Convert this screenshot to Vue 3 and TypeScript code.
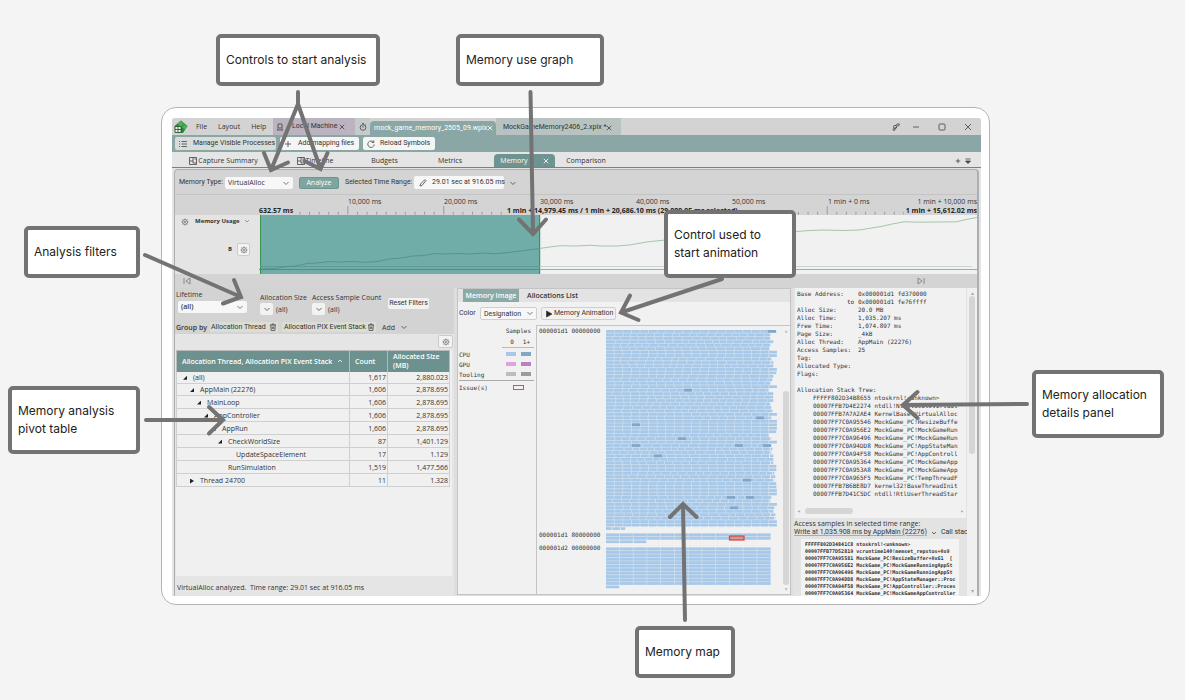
<script setup lang="ts">
interface Callout { id: string; lines: string[] }
interface TreeRow { name: string; level: number; mark: string; count: string; size: string }
interface Block { x: number; y: number; w: number; dark: boolean }

const callouts: Callout[] = [
  { id: 'start', lines: ['Controls to start analysis'] },
  { id: 'graph', lines: ['Memory use graph'] },
  { id: 'filters', lines: ['Analysis filters'] },
  { id: 'animation', lines: ['Control used to', 'start animation'] },
  { id: 'pivot', lines: ['Memory analysis', 'pivot table'] },
  { id: 'details', lines: ['Memory allocation', 'details panel'] },
  { id: 'map', lines: ['Memory map'] },
]

const arrows: string[] = [
  'M298 92V104L271 170M264 153L271 170L288 162.500M298 104L320.500 169M304.500 161L320.500 169L327.500 153',
  'M530.500 92L533 234M519 219.500L533 234L546 219.500',
  'M722 279L621 312.500M630 295.500L621 312.500L638.500 320',
  'M145 255L241 297M234 280L241 297L223 303.500',
  'M146 420H223M209 407L223 420L209 433.500',
  'M1027 404L903 405M917.500 392L903 405L917.500 418',
  'M685 620L683 504M670 517L683 504L696.500 517',
]

const timeLabels = ['10,000 ms', '20,000 ms', '30,000 ms', '40,000 ms', '50,000 ms', '1 min + 0 ms', '1 min + 10,000 ms']
const ticks = Array.from({ length: 68 }, (_, k) => ({ x: 89 + (k - 5) * 9.6, major: (k - 5) % 10 === 0 }))

const rows: TreeRow[] = [
  { name: '(all)', level: 0, mark: 'open', count: '1,617', size: '2,880.023' },
  { name: 'AppMain (22276)', level: 1, mark: 'open', count: '1,606', size: '2,878.695' },
  { name: 'MainLoop', level: 2, mark: 'open', count: '1,606', size: '2,878.695' },
  { name: 'AppController', level: 3, mark: 'open', count: '1,606', size: '2,878.695' },
  { name: 'AppRun', level: 4, mark: 'open', count: '1,606', size: '2,878.695' },
  { name: 'CheckWorldSize', level: 5, mark: 'open', count: '87', size: '1,401.129' },
  { name: 'UpdateSpaceElement', level: 6, mark: '', count: '17', size: '1.129' },
  { name: 'RunSimulation', level: 5, mark: '', count: '1,519', size: '1,477.566' },
  { name: 'Thread 24700', level: 1, mark: 'closed', count: '11', size: '1.328' },
]

const details: [string, string][] = [
  ['Base Address:', '0x000001d1 fd370000'],
  ['to', '0x000001d1 fe76ffff'],
  ['Alloc Size:', '20.0 MB'],
  ['Alloc Time:', '1,035.207 ms'],
  ['Free Time:', '1,074.897 ms'],
  ['Page Size:', '_4kB'],
  ['Alloc Thread:', 'AppMain (22276)'],
  ['Access Samples:', '25'],
  ['Tag:', ''],
  ['Allocated Type:', ''],
  ['Flags:', ''],
]

const stack = `FFFFF802D34B8655 ntoskrnl!<unknown>
00007FFB7D4E2274 ntdll!NtAllocateVirtual
00007FFB7A7A2AE4 KernelBase!VirtualAlloc
00007FF7C0A95546 MockGame_PC!ResizeBuffe
00007FF7C0A956E2 MockGame_PC!MockGameRun
00007FF7C0A96496 MockGame_PC!MockGameRun
00007FF7C0A94DD8 MockGame_PC!AppStateMan
00007FF7C0A94F58 MockGame_PC!AppControll
00007FF7C0A95364 MockGame_PC!MockGameApp
00007FF7C0A953A8 MockGame_PC!MockGameApp
00007FF7C0A965F5 MockGame_PC!TempThreadF
00007FFB7B6BE8D7 kernel32!BaseThreadInit
00007FFB7D41C5DC ntdll!RtlUserThreadStar`

const sampleStack = `FFFFF802D34841C8 ntoskrnl!<unknown>
00007FFB77D52819 vcruntime140!memset_repstos+0x9
00007FF7C0A95581 MockGame_PC!ResizeBuffer+0x61  [
00007FF7C0A956E2 MockGame_PC!MockGameRunningAppSt
00007FF7C0A96496 MockGame_PC!MockGameRunningAppSt
00007FF7C0A94DD8 MockGame_PC!AppStateManager::Proc
00007FF7C0A94F58 MockGame_PC!AppController::Proces
00007FF7C0A95364 MockGame_PC!MockGameAppController`

const legend = [
  { name: 'CPU', id: 'cpu' },
  { name: 'GPU', id: 'gpu' },
  { name: 'Tooling', id: 'tooling' },
]

const pitch = 3.46
const rowEnds = [171, 165, 165, 168, 165, 164, 172, 172, 166, 168, 169, 172, 171, 168, 167, 165, 172, 163, 168, 168, 168, 165, 166, 167, 172, 166, 172, 172, 172, 171, 163, 166, 172, 166, 167, 166, 168, 168, 168, 171, 171, 169, 170, 169, 171, 171, 172, 172, 167, 165, 172, 169, 168, 170, 170, 172, 172, 20]
const hot: Record<number, number[]> = {
  0: [162], 17: [78], 25: [150], 27: [26], 31: [72], 33: [26, 129, 157], 36: [48],
  43: [137], 48: [121, 140], 51: [124],
}

function buildMap(): Block[] {
  const out: Block[] = []
  let seed = 17
  const rnd = () => {
    seed = (seed * 1103515245 + 12345) % 2147483648
    return seed / 2147483648
  }
  rowEnds.forEach((end, r) => {
    const regular = end >= 171
    let x = 0
    while (x < end - 1) {
      const step = regular ? 8.58 : 6.5 + Math.round(rnd() * 4) * 0.9
      const w = Math.min(step, end - x)
      out.push({ x, y: r * pitch, w: w - 0.7, dark: false })
      x += step
    }
    for (const h of hot[r] ?? []) out.push({ x: h, y: r * pitch, w: 8, dark: true })
  })
  const solid = (y0: number, count: number, tail: number) => {
    for (let r = 0; r <= count; r++) {
      const end = r === count ? tail : 165
      for (let x = 0; x < end - 1; x += 13.75) {
        out.push({ x, y: y0 + r * pitch, w: Math.min(13.75, end - x) - 0.7, dark: false })
      }
    }
  }
  solid(203.5, 2, 41)
  solid(217.5, 11, 13.75)
  return out
}
const blocks = buildMap()
const gearTeeth = Array.from({ length: 8 }, (_, i) => i * 45)
</script>

<template>
  <main class="page">
    <section class="device">
      <div class="app">
        <header class="titlebar">
          <svg class="logo" viewBox="0 0 14 14"><path d="M7 .5L13.500 6L9 13L1 12.500L.5 6Z" fill="#238a35" /><path d="M7 1L10 4L7 7L3.500 4ZM10.500 4.500L13 6.500L10.500 9.500L8 7Z" fill="#49b257" /><path d="M1 6.500H7V12.500H1Z" fill="#e9f3e9" stroke="#234b2b" stroke-width=".8" /><path d="M4 6.500V12.500M1 9.500H7" stroke="#234b2b" stroke-width=".8" /></svg>
          <nav class="menu"><button>File</button><button>Layout</button><button>Help</button></nav>
          <div class="doc machine">
            <svg class="i8" viewBox="0 0 8 8"><path d="M2 1H6V5H2ZM1 7H7M2 5.500L1.500 7M6 5.500L6.500 7" /></svg>
            <span>Local Machine</span><button class="x" aria-label="Close Local Machine"><svg class="i6" viewBox="0 0 8 8"><path d="M1 1L7 7M7 1L1 7" /></svg></button>
          </div>
          <div class="watch"><svg class="i8" viewBox="0 0 8 8"><circle cx="4" cy="4.500" r="2.800" /><path d="M3 .6H5M4 3V4.500M6.200 1.500L7 2.300" /></svg></div>
          <div class="doc current"><span>mock_game_memory_2505_09.wpix</span><button class="x" aria-label="Close capture"><svg class="i6 white" viewBox="0 0 8 8"><path d="M1 1L7 7M7 1L1 7" /></svg></button></div>
          <div class="doc other"><span>MockGameMemory2406_2.xpix *</span><button class="x" aria-label="Close comparison capture"><svg class="i6" viewBox="0 0 8 8"><path d="M1 1L7 7M7 1L1 7" /></svg></button></div>
          <div class="winbtns">
            <button aria-label="Feedback"><svg class="i8" viewBox="0 0 8 8"><circle cx="3" cy="3.800" r="1.500" /><circle cx="2" cy="6.500" r="1" /><path d="M4 2.500L5 1H7.500L6.500 3H4.500M3 5.300L5 4.500" /></svg></button>
            <button aria-label="Minimize"><svg class="i8" viewBox="0 0 8 8"><path d="M1 4H7" /></svg></button>
            <button aria-label="Maximize"><svg class="i8" viewBox="0 0 8 8"><rect x="1" y="1" width="6" height="6" rx="1" /></svg></button>
            <button aria-label="Close"><svg class="i8" viewBox="0 0 8 8"><path d="M1 1L7 7M7 1L1 7" /></svg></button>
          </div>
        </header>

        <div class="toolbar">
          <button class="tool manage"><svg class="i8" viewBox="0 0 8 8"><path d="M2.500 1.500H8M2.500 4H8M2.500 6.500H8M0 1.500H1M0 4H1M0 6.500H1" /></svg>Manage Visible Processes</button>
          <button class="tool mapping"><svg class="i8" viewBox="0 0 8 8"><path d="M1 4H7M4 1V7" /></svg>Add mapping files</button>
          <button class="tool reload"><svg class="i8" viewBox="0 0 8 8"><path d="M6.500 2.200A3.200 3.200 0 1 0 7.200 4.500M6.800 .4V2.500H4.700" /></svg>Reload Symbols</button>
        </div>

        <nav class="tabs">
          <button class="tab t1"><svg class="i8" viewBox="0 0 8 8"><path d="M.5 .5H7.500V7.500H.5ZM.5 4H4V.5M4 4V6H7.500M5.500 2H7" /></svg>Capture Summary</button>
          <button class="tab t2"><svg class="i8" viewBox="0 0 8 8"><path d="M.5 .5H7.500V7.500H.5ZM.5 4H4V.5M4 4V6H7.500M5.500 2H7" /></svg>Timeline</button>
          <button class="tab t3">Budgets</button>
          <button class="tab t4">Metrics</button>
          <button class="tab t5">Memory<svg class="i6 white" viewBox="0 0 8 8"><path d="M1 1L7 7M7 1L1 7" /></svg></button>
          <button class="tab t6">Comparison</button>
          <div class="tabend"><button aria-label="New tab"><svg class="i6" viewBox="0 0 8 8"><path d="M1 4H7M4 1V7" /></svg></button><button aria-label="Tab list"><svg class="i8" viewBox="0 0 8 8"><path d="M1.500 2H6.500M1.500 4H6.500L4 6.500Z" fill="#444" /></svg></button></div>
        </nav>

        <div class="workspace">
          <div class="request">
            <label for="mtype">Memory Type:</label>
            <span class="pick type"><select id="mtype"><option>VirtualAlloc</option></select><svg viewBox="0 0 8 8"><path d="M1.500 3L4 5.500L6.500 3" /></svg></span>
            <button class="analyze">Analyze</button>
            <span class="rangelabel">Selected Time Range:</span>
            <button class="range"><svg class="i8" viewBox="0 0 8 8"><path d="M1 7L1.500 5L5.500 1Q6.500 .5 7 1.500L3 6.500Z" /></svg>29.01 sec at 916.05 ms</button>
            <button class="plain" aria-label="Range options"><svg class="i8" viewBox="0 0 8 8"><path d="M1.500 3L4 5.500L6.500 3" /></svg></button>
          </div>

          <div class="timeline">
            <aside class="lane">
              <div class="lanehead">
                <svg class="i8 gear" viewBox="0 0 8 8"><circle cx="4" cy="4" r="2.500" /><circle cx="4" cy="4" r=".9" /><path v-for="a in gearTeeth" :key="a" d="M4 1.500V.5" :transform="`rotate(${a} 4 4)`" /></svg>
                <b>Memory Usage</b>
                <svg class="i8 faint" viewBox="0 0 8 8"><path d="M2 2L4 4L6 2" /></svg>
              </div>
              <div class="laneunit"><b>B</b><button class="gearbtn" aria-label="Lane settings"><svg class="i8 gear" viewBox="0 0 8 8"><circle cx="4" cy="4" r="2.500" /><circle cx="4" cy="4" r=".9" /><path v-for="a in gearTeeth" :key="a" d="M4 1.500V.5" :transform="`rotate(${a} 4 4)`" /></svg></button></div>
            </aside>
            <div class="chart">
              <div class="ruler">
                <div class="times"><span v-for="t in timeLabels" :key="t">{{ t }}</span></div>
                <div class="scale">
                  <svg class="ticks" viewBox="0 0 719 10" preserveAspectRatio="none"><path v-for="(t, i) in ticks" :key="i" :d="`M${t.x} ${t.major ? 0 : 6.500}V9.500`" /></svg>
                  <div class="marks"><b>632.57 ms</b><b class="sel">1 min + 14,979.45 ms / 1 min + 20,686.10 ms (29,009.95 ms selected)</b><b class="end">1 min + 15,612.02 ms</b></div>
                </div>
              </div>
              <svg class="plot" viewBox="0 0 719 59" preserveAspectRatio="none">
                <rect width="719" height="59" fill="#f1f1f1" />
                <rect x="1" width="280" height="59" fill="#70ada8" />
                <path d="M1.500 0V59M281 0V59" stroke="#389552" stroke-width="1.200" />
                <path d="M1 51.500H281" stroke="#5e9698" stroke-width=".8" /><path d="M281 51.500H714" stroke="#becbd2" stroke-width=".8" />
                <path d="M0 54.500H281" stroke="#53868c" stroke-width=".9" /><path d="M281 54.500H719" stroke="#c592c4" />
                <path d="M1 54L16 53.500L28 51.500L36 51L48 48.500L58 48L71 46.500L80 47L93 46.500L106 47.300L118 46.500L131 44L142 43L154 41L165 40.500L176 38.500L188 39L199 38.500L211 39L225 38L236 38.800L250 37.500L266 35.500L281 33.500" fill="none" stroke="#4c8f82" stroke-width=".8" />
                <path d="M281 33.500L291 32L302 30.700L316 31L332 30.300L342 31L358 31L371 30L388 27L407 25L430 23L470 21L510 19L538 16.500L551 15.500L565 15L586 15.500L601 15L623 11.500L634 9L646 6.800L661 7.200L698 6.800L708 4.500L719 2.500" fill="none" stroke="#9cbf9f" stroke-width=".9" />
              </svg>
            </div>
          </div>

          <div class="seek"><button aria-label="Go to start"><svg class="i8" viewBox="0 0 8 8"><path d="M1 1V7M7 1L3 4L7 7Z" /></svg></button><button aria-label="Go to end"><svg class="i8" viewBox="0 0 8 8"><path d="M7 1V7M1 1L5 4L1 7Z" /></svg></button></div>

          <div class="panels">
            <section class="left">
              <div class="filterbar">
                <div class="frow">
                  <div class="field life"><label for="life">Lifetime</label><span class="pick"><select id="life"><option>(all)</option></select><svg viewBox="0 0 8 8"><path d="M1.500 3L4 5.500L6.500 3" /></svg></span></div>
                  <div class="field size"><span>Allocation Size</span><div><button class="mini" aria-label="Allocation size"><svg class="i8" viewBox="0 0 8 8"><path d="M1.500 3L4 5.500L6.500 3" /></svg></button>(all)</div></div>
                  <div class="field access"><span>Access Sample Count</span><div><button class="mini" aria-label="Access sample count"><svg class="i8" viewBox="0 0 8 8"><path d="M1.500 3L4 5.500L6.500 3" /></svg></button>(all)</div></div>
                  <button class="reset">Reset Filters</button>
                </div>
                <div class="group"><b>Group by</b>
                  <button class="chip">Allocation Thread<svg class="i8" viewBox="0 0 8 8"><path d="M1 2H7M3 2V1H5V2M1.700 2L2.200 7.500H5.800L6.300 2M3.300 3.500V6M4.700 3.500V6" /></svg></button>
                  <button class="chip">Allocation PIX Event Stack<svg class="i8" viewBox="0 0 8 8"><path d="M1 2H7M3 2V1H5V2M1.700 2L2.200 7.500H5.800L6.300 2M3.300 3.500V6M4.700 3.500V6" /></svg></button>
                  <button class="plain add">Add<svg class="i8" viewBox="0 0 8 8"><path d="M1.500 3L4 5.500L6.500 3" /></svg></button>
                </div>
              </div>
              <div class="gearrow"><button class="gearbtn" aria-label="Table settings"><svg class="i8 gear" viewBox="0 0 8 8"><circle cx="4" cy="4" r="2.500" /><circle cx="4" cy="4" r=".9" /><path v-for="a in gearTeeth" :key="a" d="M4 1.500V.5" :transform="`rotate(${a} 4 4)`" /></svg></button></div>
              <div class="tablewrap">
                <table>
                  <colgroup><col class="c1"><col class="c2"><col class="c3"></colgroup>
                  <thead><tr><th><span class="sort">Allocation Thread, Allocation PIX Event Stack<svg class="i8" viewBox="0 0 8 8"><path d="M2 5L4 3L6 5" /></svg></span></th><th>Count</th><th>Allocated Size<br>(MB)</th></tr></thead>
                  <tbody>
                    <tr v-for="r in rows" :key="r.name"><td :class="'lv' + r.level"><i :class="['mark', r.mark]"></i>{{ r.name }}</td><td class="num">{{ r.count }}</td><td class="num">{{ r.size }}</td></tr>
                  </tbody>
                </table>
              </div>
              <footer class="status">VirtualAlloc analyzed.&nbsp; Time range: 29.01 sec at 916.05 ms</footer>
            </section>

            <section class="middle">
              <nav class="subtabs"><button class="on">Memory Image</button><button>Allocations List</button></nav>
              <div class="colorrow"><label for="color">Color</label><span class="pick"><select id="color"><option>Designation</option></select><svg viewBox="0 0 8 8"><path d="M1.500 3L4 5.500L6.500 3" /></svg></span><button class="play"><svg class="i8" viewBox="0 0 8 8"><path d="M1.500 1L7 4L1.500 7Z" fill="#222" /></svg>Memory Animation</button></div>
              <div class="mapwrap">
                <div class="legend">
                  <div class="samples">Samples</div>
                  <div class="cols"><span>0</span><span>1+</span></div>
                  <div v-for="l in legend" :key="l.id" class="lrow"><span>{{ l.name }}</span><i :class="l.id"></i><i :class="[l.id, 'many']"></i></div>
                  <div class="issue"><span>Issue(s)</span><i></i></div>
                </div>
                <div class="memory">
                  <div class="addr"><span>000001d1 00000000</span><span>000001d1 80000000</span><span>000001d2 00000000</span></div>
                  <svg class="blocks" viewBox="0 0 174 260">
                    <g fill="#d0e0ef"><rect width="163" height="196" /><rect y="203.500" width="165" height="6" /><rect y="217.500" width="165" height="37.500" /></g>
                    <rect v-for="(b, i) in blocks" :key="i" :x="b.x" :y="b.y" :width="b.w" height="2.700" :fill="b.dark ? '#83a6c8' : '#a7c8e8'" />
                    <rect x="123.500" y="206" width="14.500" height="4" fill="#c59aa4" stroke="#d9482c" stroke-width="1.200" />
                  </svg>
                  <div class="vbar m"><span>▴</span><i></i><span>▾</span></div>
                </div>
              </div>
            </section>

            <section class="right">
              <div class="info">
                <div class="record">
                  <dl><template v-for="d in details" :key="d[0]"><dt :class="{ to: d[0] === 'to' }">{{ d[0] }}</dt><dd>{{ d[1] }}</dd></template></dl>
                  <p class="treehead">Allocation Stack Tree:</p>
                  <pre class="stack">{{ stack }}</pre>
                  <div class="hbar"><span>◂</span><i></i><span>▸</span></div>
                </div>
                <p class="access1">Access samples in selected time range:</p>
                <div class="access2"><button>Write at 1,035.908 ms by AppMain (22276)</button><svg class="i8" viewBox="0 0 8 8"><path d="M2 3L4 5L6 3" /></svg><span>Call stack</span></div>
                <pre class="samplestack">{{ sampleStack }}</pre>
              </div>
              <div class="vbar r"><span>▴</span><i></i><span>▾</span></div>
            </section>
          </div>
        </div>
      </div>
    </section>

    <svg class="arrows" viewBox="0 0 1185 700"><path v-for="a in arrows" :key="a" :d="a" /></svg>
    <div v-for="c in callouts" :key="c.id" :class="['callout', c.id]"><span v-for="l in c.lines" :key="l">{{ l }}</span></div>
  </main>
</template>

<style>
body { margin: 0; background: #f4f4f4; }
</style>

<style scoped>
* { box-sizing: border-box; }
.page { position: relative; min-height: 700px; padding: 107px 195px 95px 161px; background: #f4f4f4; overflow: hidden; font-family: "Open Sans", "Noto Sans", sans-serif; font-size: 7px; line-height: 9px; color: #333; white-space: nowrap; }
button, select { font: inherit; color: inherit; background: none; border: 0; padding: 0; margin: 0; white-space: nowrap; }
p, pre, dl, dd { margin: 0; }
.i8 { width: 8px; height: 8px; flex: none; fill: none; stroke: #444; stroke-width: .8; }
.i6 { display: block; width: 6px; height: 6px; flex: none; fill: none; stroke: #444; stroke-width: 1.1; }
.white { stroke: #fff; }
.faint { opacity: .6; }
.device { background: #fff; border: 1px solid #b4b4b4; border-radius: 15px; padding: 10px 8px 8px 10px; }
.app { background: #e4e4e4; overflow: hidden; border-radius: 3px 3px 0 0; }
.doc, .toolbar, .range, .rangelabel, .request label, .colorrow, .access2, .chip, .reset { font-family: Roboto, "Open Sans", sans-serif; }

.titlebar { display: flex; height: 17px; background: #d3d3d3; align-items: stretch; }
.logo { width: 14px; height: 14px; margin: 2px 8px 0 2px; flex: none; }
.menu { display: flex; gap: 11px; width: 77px; flex: none; }
.doc { display: flex; align-items: center; padding: 2px 4px 0; flex: none; }
.doc .x { margin-left: auto; }
.machine { width: 82px; background: #bbb3bf; padding: 0 10px 0 3px; }
.machine span { margin-left: 8px; }
.watch { width: 15px; display: flex; align-items: center; justify-content: center; background: #c4cbca; flex: none; }
.current { width: 126px; background: #8ba7a5; color: #fff; border-radius: 4px 4px 0 0; margin-top: 3px; padding-top: 0; padding-right: 4px; }
.other { width: 125px; background: #b8c3c1; padding-left: 7px; padding-right: 10px; }
.winbtns { display: flex; gap: 18px; margin-left: auto; align-items: center; padding-right: 9px; }
.winbtns button { display: flex; }
.winbtns button:first-child { margin-right: -6px; }

.toolbar { display: flex; height: 17px; padding: 2px 3px; background: #8ba7a5; gap: 4px; }
.tool { display: flex; align-items: center; background: #f5f5f5; border-radius: 2px; height: 13px; padding: 0 4px; gap: 5px; flex: none; }
.manage { width: 101px; background: #d8dddc; gap: 6px; }
.mapping { width: 79px; gap: 6px; }
.reload { width: 72px; }

.tabs { display: flex; height: 16px; padding: 2px 3px 0; border-bottom: 1px solid #658b89; background: #e5e5e5; }
.tab { display: flex; align-items: center; justify-content: center; gap: 1px; flex: none; }
.t1 { width: 97px; }
.t2 { width: 86px; }
.t3 { width: 53px; }
.t4 { width: 78px; }
.t5 { width: 61px; margin-left: 5px; background: #6d9491; color: #fff; border-radius: 4px 4px 0 0; gap: 15px; }
.t6 { width: 62px; }
.tabend { margin-left: auto; display: flex; align-items: center; gap: 3px; padding-right: 6px; }
.tabend button { display: flex; }

.workspace { margin: 1px 2px 0 2px; border: 1px solid #aab0b0; border-right-width: 2px; border-bottom: 0; border-radius: 4px 4px 0 0; background: #d4d4d4; overflow: hidden; }
.request { display: flex; align-items: center; height: 25px; padding: 1px 0 0 4px; border-bottom: 1px solid #c4c4c4; }
.request label { width: 46px; }
.pick { position: relative; display: inline-flex; }
.pick select { appearance: none; width: 100%; height: 12px; background: #f7f7f7; border-radius: 2px; padding: 0 10px 0 3px; line-height: 12px; }
.pick svg { position: absolute; right: 3px; top: 2px; width: 8px; height: 8px; fill: none; stroke: #555; stroke-width: .8; pointer-events: none; }
.type { width: 68px; margin-right: 6px; }
.analyze { width: 40px; height: 12px; background: #7fa5a1; color: #fff; border: 1px solid #6b9692; border-radius: 2px; line-height: 10px; margin-right: 6px; }
.rangelabel { width: 69px; }
.range { display: flex; align-items: center; gap: 5px; width: 90px; height: 13px; background: #f7f7f7; border-radius: 2px; padding-left: 5px; }
.plain { display: flex; align-items: center; gap: 4px; margin-left: 5px; }

.timeline { display: flex; }
.lane { width: 84px; flex: none; margin-top: 20px; background: #e4e4e4; }
.lanehead { display: flex; align-items: center; padding: 2px 8px 0 6px; font-size: 6px; }
.lanehead b { margin-left: 6px; margin-right: auto; }
.laneunit { display: flex; align-items: center; justify-content: flex-end; gap: 5px; padding: 17px 9px 0 0; font-size: 6px; }
.gearbtn { display: flex; align-items: center; justify-content: center; width: 13px; height: 13px; background: #f3f3f3; border: 1px solid #ccc; border-radius: 2px; }
.gear { stroke-width: .6; stroke: #555; }
.chart { flex: 1; min-width: 0; }
.ruler { height: 20px; }
.times { display: flex; padding: 2px 0 0 89px; height: 11px; overflow: hidden; }
.times span { flex: 0 0 96px; }
.times span:nth-last-child(2) { flex: 1; min-width: 0; }
.times span:last-child { flex: none; }
.scale { display: grid; height: 9px; }
.ticks, .marks { grid-area: 1 / 1; width: 100%; height: 9px; }
.ticks path { stroke: #8f8f8f; stroke-width: .9; }
.marks { display: flex; z-index: 1; color: #222; line-height: 9px; }
.marks b { background: #d4d4d4; flex: none; }
.marks b:first-child { width: 36px; }
.marks .sel { margin-left: 212px; }
.marks .end { margin-left: auto; padding-left: 2px; }
.plot { display: block; width: 100%; height: 59px; }

.seek { display: flex; justify-content: space-between; align-items: center; height: 14px; padding: 0 52px 0 8px; }
.seek button { display: flex; }
.seek .i8 { stroke: #777; }

.panels { display: flex; height: 308px; background: #dedede; }
.left { width: 279px; flex: none; display: flex; flex-direction: column; background: #e5e5e5; }
.filterbar { height: 46px; background: #d3d3d3; padding: 2px 0 0 1px; }
.frow { display: flex; align-items: flex-start; height: 32px; }
.field { display: flex; flex-direction: column; }
.field > div { display: flex; align-items: center; gap: 3px; }
.life { width: 84px; gap: 2px; }
.life .pick { width: 69px; margin-left: 2px; font-weight: 600; }
.size { width: 52px; padding-top: 3px; gap: 1px; }
.access { width: 76px; padding-top: 3px; gap: 1px; }
.mini { width: 13px; height: 12px; background: #f2f2f2; border-radius: 2px; display: flex; align-items: center; justify-content: center; }
.reset { width: 41px; height: 11px; line-height: 11px; background: #f2f2f2; border-radius: 2px; margin-top: 8px; }
.group { display: flex; align-items: center; gap: 4px; height: 10px; }
.group b { width: 30px; font-weight: 600; }
.chip { display: flex; align-items: center; justify-content: space-between; background: #dbdcd3; width: 68px; height: 10px; padding: 0 1px; }
.chip + .chip { width: 94px; padding-left: 2px; }
.add { margin-left: 2px; gap: 5px; }
.gearrow { height: 16px; display: flex; justify-content: flex-end; padding: 1px 1px 0 0; }
.gearrow .gearbtn { width: 15px; }
.tablewrap { flex: 1; margin: 0 2px 0 1px; background: #f0f0f0; }
table { width: 274px; border-collapse: collapse; table-layout: fixed; border: 1px solid #bbb; }
.c1 { width: 173px; }
.c2 { width: 38px; }
th { background: #6d918e; color: #fff; text-align: left; font-weight: 600; height: 21px; padding: 0 0 0 5px; border-right: 1px solid #aac0be; line-height: 9px; }
.sort { display: flex; align-items: center; justify-content: space-between; padding-right: 5px; }
.sort .i8 { stroke: #fff; }
td { height: 13px; padding: 0 1px; line-height: 9px; border: 1px solid #cfcfcf; border-top: 0; }
tr:nth-child(-n+2) td { height: 12px; }
.num { text-align: right; }
.mark { display: inline-block; width: 10px; height: 4px; }
.mark::before { content: ""; display: block; visibility: hidden; width: 4px; height: 4px; background: #222; clip-path: polygon(100% 0, 100% 100%, 0 100%); }
.mark.open::before { visibility: visible; }
.mark.closed::before { visibility: visible; height: 5px; clip-path: polygon(0 0, 100% 50%, 0 100%); }
td.lv0 { padding-left: 6px; }
td.lv1 { padding-left: 13px; }
td.lv2 { padding-left: 20px; }
td.lv3 { padding-left: 27px; }
td.lv4 { padding-left: 35px; }
td.lv5 { padding-left: 41px; }
td.lv6 { padding-left: 49px; }
.status { height: 20px; padding: 7px 2px 0; }

.middle { flex: 1; min-width: 0; margin: 0 2px 1px 3px; background: #f1f1f1; border: 1px solid #c4c4c4; display: flex; flex-direction: column; }
.subtabs { display: flex; gap: 8px; height: 13px; padding-left: 5px; background: #e3e3e3; font-weight: 600; }
.subtabs .on { width: 56px; background: #8ba9a6; color: #fff; }
.colorrow { display: flex; align-items: center; height: 23px; padding-left: 1px; }
.colorrow label { width: 21px; }
.colorrow .pick { width: 57px; margin-right: 4px; }
.colorrow select, .play { border: 1px solid #cfcfcf; height: 13px; }
.play { display: flex; align-items: center; gap: 1px; width: 75px; padding-left: 3px; border-radius: 2px; }
.mapwrap { display: flex; flex: 1; min-height: 0; font-family: "DejaVu Sans Mono", "Liberation Mono", monospace; font-size: 6px; }
.legend { width: 78px; padding: 1px 2px 0 1px; flex: none; }
.samples { text-align: right; padding-right: 3px; }
.cols { display: flex; justify-content: flex-end; gap: 9px; border-bottom: 1px solid #bbb; margin-left: 43px; padding: 2px 4px 1px 0; }
.lrow { display: flex; align-items: center; height: 10px; gap: 5px; }
.cols + .lrow { margin-top: 1px; }
.lrow span { width: 42px; }
.lrow i { width: 10px; height: 4px; }
.cpu { background: #a7c8e8; }
.cpu.many { background: #83a6c8; }
.gpu { background: #e3a0e3; }
.gpu.many { background: #bd7fc0; }
.tooling { background: #bdbdbd; }
.tooling.many { background: #9b9b9b; }
.issue { display: flex; align-items: center; border-top: 1px solid #aaa; margin-top: 1px; padding-top: 2px; }
.issue span { width: 54px; }
.issue i { width: 11px; height: 5px; border: 1px solid #e8484a; background: #fbeeee; }
.memory { flex: 1; display: flex; border: 1px solid #c4c4c4; border-right: 0; border-bottom: 0; padding-left: 2px; }
.addr { width: 67px; display: grid; grid-template-rows: 204px 13px 14px; flex: none; }
.blocks { width: 174px; height: 260px; flex: none; margin-top: 4px; }
.vbar { display: flex; flex-direction: column; align-items: center; font-size: 6px; line-height: 6px; color: #aaa; }
.vbar i { width: 6px; border-radius: 3px; background: #d5d5d5; }
.m { margin-left: auto; width: 8px; padding: 2px 0; }
.m i { height: 194px; margin: auto 0 1px; }

.right { width: 184px; flex: none; display: flex; background: #f0f0f0; overflow: hidden; }
.info { width: 175px; overflow: hidden; display: flex; flex-direction: column; background: #e3e3e3; }
.record { background: #f1f1f1; margin: 0 1px 0 2px; padding: 2px 2px 0 2px; font-family: "DejaVu Sans Mono", "Liberation Mono", monospace; font-size: 6px; line-height: 8px; overflow: hidden; }
dl { display: grid; grid-template-columns: 61px 1fr; grid-auto-rows: 8px; }
.to { padding-left: 50px; }
.treehead { margin-top: 8px; }
pre { font-family: "DejaVu Sans Mono", "Liberation Mono", monospace; overflow: hidden; }
.stack { padding-left: 16px; }
.hbar { display: flex; align-items: center; gap: 4px; height: 20px; padding-top: 6px; color: #aaa; }
.hbar i { width: 48px; height: 6px; border-radius: 3px; background: #d5d5d5; margin-right: auto; }
.access1 { padding: 1px 0 0 1px; }
.access2 { display: flex; align-items: center; gap: 3px; padding-left: 1px; }
.access2 button { text-decoration: underline; text-decoration-color: #aaa; }
.samplestack { margin: 2px 8px 0 8px; padding: 2px 0 0 4px; background: #f3f3f3; font-size: 5px; line-height: 7px; font-weight: 700; flex: 1; }
.r { width: 10px; padding: 2px 0; }
.r i { height: 158px; margin-bottom: auto; }

.arrows { position: absolute; z-index: 2; left: 0; top: 0; width: 1185px; height: 700px; fill: none; stroke: #737373; stroke-width: 4; stroke-linecap: round; pointer-events: none; }
.callout { position: absolute; z-index: 3; display: flex; flex-direction: column; justify-content: center; background: #fff; border: 4px solid #737373; border-radius: 5px; padding: 0 6px; font-family: Inter, "Open Sans", sans-serif; font-size: 12px; line-height: 18px; font-weight: 400; height: 52px; color: #222; }
.start { left: 216px; top: 34px; width: 164px; }
.graph { left: 456px; top: 34px; width: 148px; }
.filters { left: 24px; top: 226px; width: 116px; }
.animation { left: 664px; top: 210px; width: 132px; height: 68px; }
.pivot { left: 8px; top: 386px; width: 132px; height: 68px; }
.details { left: 1032px; top: 370px; width: 132px; height: 68px; }
.map { left: 635px; top: 626px; width: 100px; }
</style>
